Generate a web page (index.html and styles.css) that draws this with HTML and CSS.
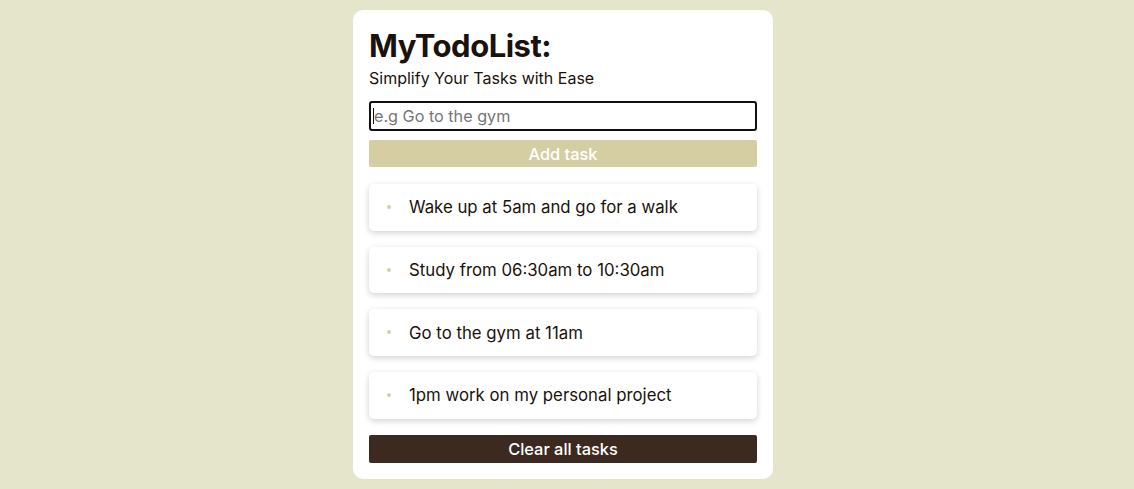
FILE: index.html
```html
<!DOCTYPE html>
<html lang="en">
<head>
<meta charset="utf-8">
<title>MyTodoList</title>
<link rel="stylesheet" href="styles.css">
</head>
<body>
<div class="page">
  <main class="card">
    <h1 class="title">MyTodoList:</h1>
    <p class="subtitle">Simplify Your Tasks with Ease</p>
    <div class="input-box"><span class="caret"></span><span class="placeholder">e.g Go to the gym</span></div>
    <button class="btn btn-add">Add task</button>
    <ul class="tasks">
      <li class="task">Wake up at 5am and go for a walk</li>
      <li class="task">Study from 06:30am to 10:30am</li>
      <li class="task">Go to the gym at 11am</li>
      <li class="task">1pm work on my personal project</li>
    </ul>
    <button class="btn btn-clear">Clear all tasks</button>
  </main>
</div>
</body>
</html>
```

FILE: styles.css
```css
* { box-sizing: border-box; }
html, body { margin: 0; padding: 0; }
body {
  background: #e5e5cb;
  font-family: "Inter", "Noto Sans", sans-serif;
  color: #1a120b;
  height: 489px;
  overflow: hidden;
}
.page {
  display: flex;
  justify-content: center;
  padding: 10px 8px 0 0;
}
.card {
  width: 420px;
  background: #ffffff;
  border-radius: 10px;
  padding: 16px;
  display: flex;
  flex-direction: column;
}
.title {
  margin: 0;
  font-size: 31px;
  font-weight: 700;
  line-height: 40px;
  letter-spacing: -0.5px;
  color: #1a120b;
}
.subtitle {
  margin: 0;
  font-size: 16px;
  line-height: 24px;
  color: #1a120b;
}
.input-box {
  margin-top: 11px;
  height: 30px;
  border: 2px solid #111;
  border-radius: 3px;
  display: flex;
  align-items: center;
  padding-left: 2px;
}
.caret {
  width: 1px;
  height: 16px;
  background: #111;
}
.placeholder {
  font-size: 16.2px;
  color: #757575;
}
.btn {
  border: none;
  width: 100%;
  border-radius: 2px;
  font-family: inherit;
  font-size: 16.4px;
  font-weight: 500;
  padding: 0;
}
.btn-add {
  margin-top: 9px;
  height: 27px;
  background: #d5cea3;
  color: #ffffff;
}
.tasks {
  list-style: none;
  margin: 17px 0 0;
  padding: 0;
  display: flex;
  flex-direction: column;
  gap: 16px;
}
.task {
  position: relative;
  height: 46.67px;
  display: flex;
  align-items: center;
  padding-left: 40px;
  background: #fff;
  border-radius: 5px;
  box-shadow: 0 2px 6px rgba(0,0,0,0.18);
  font-size: 16.8px;
  color: #1a120b;
}
.task::before {
  content: "";
  position: absolute;
  left: 18px;
  top: 21px;
  width: 4px;
  height: 4px;
  border-radius: 50%;
  background: #d5cea3;
}
.btn-clear {
  margin-top: 16px;
  height: 28px;
  background: #3c2a21;
  color: #ffffff;
}
```
